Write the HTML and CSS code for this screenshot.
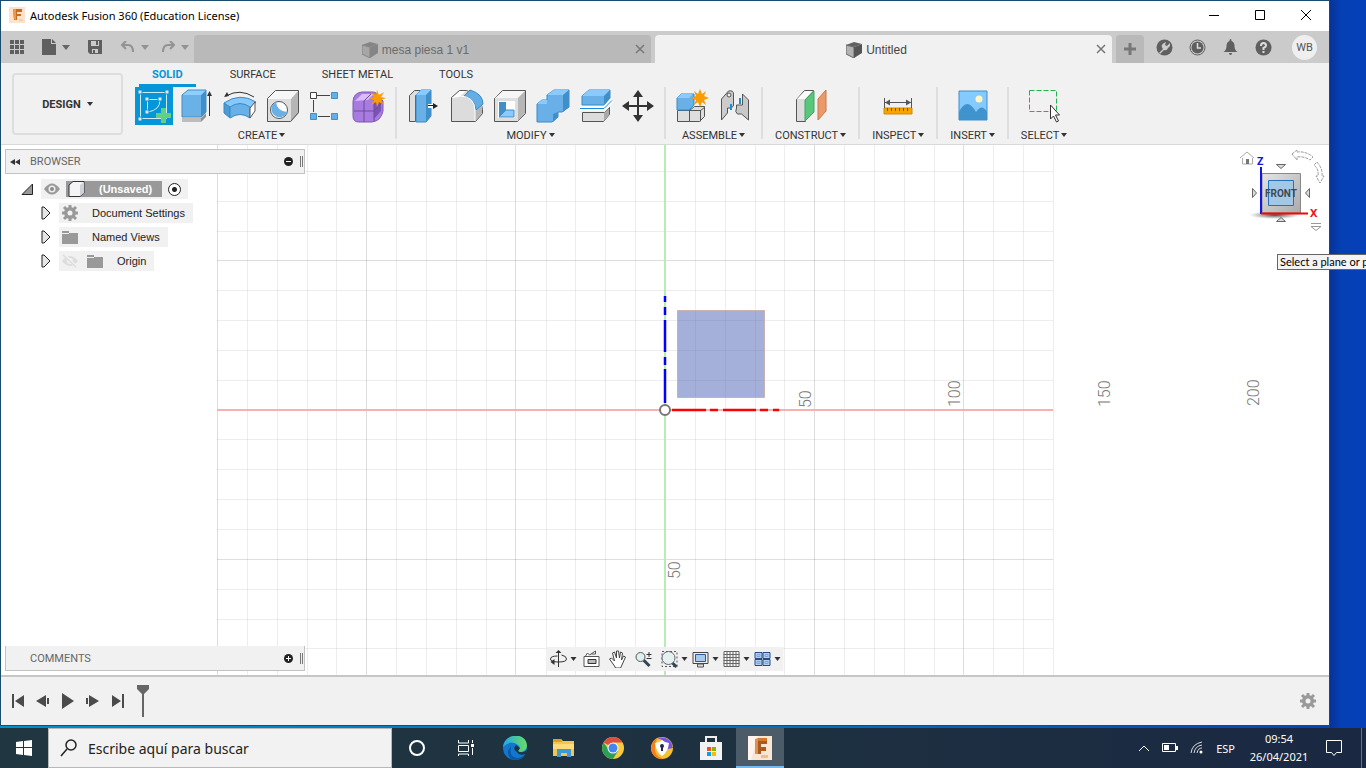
FILE: index.html
```html
<!DOCTYPE html>
<html lang="en">
<head>
<meta charset="utf-8">
<title>Autodesk Fusion 360 (Education License)</title>
<link rel="stylesheet" href="styles.css">
</head>
<body>
<main class="desktop">
  <div class="window">
    <header class="titlebar">
      <svg class="title-icon" width="16" height="16" viewBox="0 0 16 16"><rect width="16" height="16" fill="#fbe3cf"/><path d="M4 2h9v3H8v2h4v2H8v4H5z" fill="#c96d1c"/><path d="M4 2h3v11l-2-1z" fill="#e99a4b"/><path d="M10 13h4" stroke="#f0b98a"/></svg>
      <h1 class="title">Autodesk Fusion 360 (Education License)</h1>
      <div class="window-controls">
        <button class="plain ctl" aria-label="Minimize"><svg width="12" height="12"><path d="M1 6.500h10" stroke="#000"/></svg></button>
        <button class="plain ctl" aria-label="Maximize"><svg width="12" height="12"><path d="M1.500 1.500h9v9h-9z" fill="none" stroke="#000"/></svg></button>
        <button class="plain ctl" aria-label="Close"><svg width="12" height="12"><path d="M1 1l10 10M11 1L1 11" stroke="#000"/></svg></button>
      </div>
    </header>

    <nav class="appbar">
      <div class="quick">
        <button class="plain" aria-label="Data panel"><svg width="16" height="16" viewBox="0 0 16 16"><path d="M1 1h4v4H1zM6 1h4v4H6zM11 1h4v4h-4zM1 6h4v4H1zM6 6h4v4H6zM11 6h4v4h-4zM1 11h4v4H1zM6 11h4v4H6zM11 11h4v4h-4z" fill="#5f5f5f"/></svg></button>
        <button class="plain file" aria-label="File"><svg width="14" height="16" viewBox="0 0 14 16"><path d="M0 0h9v5h5v11H0zM10 0l4 4h-4z" fill="#5f5f5f"/></svg><i class="caret grey"></i></button>
        <button class="plain save" aria-label="Save"><svg width="14" height="14" viewBox="0 0 14 14"><path d="M0 0h14v14H2l-2-2zM3 1v5h8V1zM4 9v4h6V9z" fill="#5f5f5f" fill-rule="evenodd"/><path d="M8 1h2v4H8zM5 10h2v3H5z" fill="#5f5f5f"/></svg></button>
        <button class="plain undo" aria-label="Undo"><svg width="14" height="12" viewBox="0 0 14 12"><path d="M5 0L1 4l4 4M1 4h6q5 0 5 7" fill="none" stroke="#939393" stroke-width="2"/></svg><i class="caret light"></i></button>
        <button class="plain undo" aria-label="Redo"><svg width="14" height="12" viewBox="0 0 14 12"><path d="M9 0l4 4-4 4M13 4H7q-5 0-5 7" fill="none" stroke="#939393" stroke-width="2"/></svg><i class="caret light"></i></button>
      </div>
      <div class="doc-tabs">
        <div class="doc-tab idle">
          <svg width="16" height="16" viewBox="0 0 16 16"><path d="M0 3l8-3 8 2-8 3z" fill="#858585"/><path d="M0 3l8 2v11l-8-4z" fill="#a6a6a6" stroke="#858585"/><path d="M8 5l8-3v9l-8 5z" fill="#858585"/></svg><span>mesa piesa 1 v1</span>
          <button class="plain tab-close" aria-label="Close tab"><svg width="10" height="10"><path d="M1 1l8 8M9 1L1 9" stroke="#777" stroke-width="1.500"/></svg></button>
        </div>
        <div class="doc-tab current">
          <svg width="16" height="16" viewBox="0 0 16 16"><path d="M0 3l8-3 8 2-8 3z" fill="#626262"/><path d="M0 3l8 2v11l-8-4z" fill="#b2b2b2" stroke="#666"/><path d="M8 5l8-3v9l-8 5z" fill="#555"/></svg><span>Untitled</span>
          <button class="plain tab-close" aria-label="Close tab"><svg width="10" height="10"><path d="M1 1l8 8M9 1L1 9" stroke="#777" stroke-width="1.500"/></svg></button>
        </div>
        <button class="plain new-tab" aria-label="New design"><svg width="12" height="12"><path d="M6 0v12M0 6h12" stroke="#777" stroke-width="3"/></svg></button>
      </div>
      <div class="status-icons">
        <button class="plain" aria-label="Extensions"><svg width="17" height="17" viewBox="0 0 17 17"><circle cx="8.500" cy="8.500" r="8" fill="#5f5f5f"/><path d="M3 14l4-4q-3-4 1-6l2-1-1 3 2 1 3-3 0 3-2 2q-1 3-4 2l-4 4z" fill="#cbcbcb"/></svg></button>
        <button class="plain" aria-label="Job status"><svg width="17" height="17" viewBox="0 0 17 17"><circle cx="8.500" cy="8.500" r="7.500" fill="none" stroke="#5f5f5f"/><circle cx="8.500" cy="8.500" r="6" fill="#5f5f5f"/><path d="M8.500 4v5H12" fill="none" stroke="#ddd" stroke-width="1.500"/></svg></button>
        <button class="plain" aria-label="Notifications"><svg width="17" height="17" viewBox="0 0 17 17"><path d="M8.500 0q1 0 1 2 3 1 3 5 0 4 3 6h-14q3-2 3-6 0-4 3-5 0-2 1-2zM7 14h3q0 2-1.500 2T7 14z" fill="#5f5f5f"/></svg></button>
        <button class="plain" aria-label="Help"><svg width="17" height="17" viewBox="0 0 17 17"><circle cx="8.500" cy="8.500" r="8" fill="#5f5f5f"/><path d="M6 7q0-3 2.500-3T11 6.500Q11 8 8.500 9v2M8.500 12v2" fill="none" stroke="#ddd" stroke-width="2"/></svg></button>
        <button class="plain avatar">WB</button>
      </div>
    </nav>

    <section class="ribbon">
      <button class="design">DESIGN <i class="caret"></i></button>
      <div class="ribbon-main">
        <nav class="ribbon-tabs">
          <a class="rtab on" href="#">SOLID</a><a class="rtab" href="#">SURFACE</a><a class="rtab" href="#">SHEET METAL</a><a class="rtab" href="#">TOOLS</a>
        </nav>
        <div class="groups">
          <div class="group">
            <div class="tools">
              <button class="plain tool active" aria-label="Create sketch"><svg width="38" height="38"><g fill="none" stroke="#cfe9f7"><path d="M5.500 5.500h26v26h-26z"/><path d="M12.500 26V12.500H25M25 13q0 10-12 12"/></g><path d="M3 3h4v4H3zM30 3h4v4h-4zM3 30h4v4H3zM10 10h4v4h-4zM23 10h4v4h-4zM10 23h4v4h-4z" fill="#e6e6e6" stroke="#0696d7"/><path d="M26 21h5v5h5v5h-5v5h-5v-5h-5v-5h5z" fill="#5fd084"/></svg></button>
              <button class="plain tool" aria-label="Extrude"><svg width="38" height="38"><path d="M4 31h19v4H4z" fill="#bdbdbd"/><path d="M23 31l5-5v4l-5 5z" fill="#929292"/><path d="M4 8l6-5h18l-5 5z" fill="#8fceff"/><path d="M4 8h19v22H4z" fill="#6ab1e7"/><path d="M23 8l5-5v22l-5 5z" fill="#3e8fca"/><path d="M4 30V8l6-5h18v22l-5 5z" fill="none" stroke="#438dc1"/><path d="M31.500 29V6" stroke="#333"/><path d="M29 9l2.500-5L34 9z" fill="#333"/></svg></button>
              <button class="plain tool" aria-label="Revolve"><svg width="38" height="38"><path d="M3 16q16-11 32-1l-6 7q-10-7-20 0z" fill="#87c9fc" stroke="#388bc6"/><path d="M3 16l6 4v11l-6-5z" fill="#4b9bd5" stroke="#388bc6"/><path d="M9 20q10-7 20 0v11q-10-7-20 0z" fill="#69b0e6" stroke="#388bc6"/><path d="M29 21l5-6v9l-5 7z" fill="#fff" stroke="#555"/><path d="M5 9q14-8 28 1" fill="none" stroke="#333"/><path d="M3 10l3-5 2 4z" fill="#333"/></svg></button>
              <button class="plain tool" aria-label="Hole"><svg width="38" height="38"><path d="M3 12l9-9h23l-8 9z" fill="#f7f7f7"/><path d="M27 12l8-9v23l-8 9z" fill="#b6b6b6"/><path d="M3 12h24v23H3z" fill="#dedede"/><path d="M3.500 34.500V11.500l8-8h23v22l-8 9z" fill="none" stroke="#555"/><circle cx="15" cy="23" r="8.500" fill="#fff" stroke="#555"/><path d="M12 15q1 9 11 10a8 8 0 1 1-11-10z" fill="#69b0e6"/></svg></button>
              <button class="plain tool" aria-label="Pattern"><svg width="38" height="38"><path d="M10 8.500h13M6.500 13v12M11 29.500h12" stroke="#444"/><path d="M3.500 5.500h6v6h-6z" fill="#fff" stroke="#444"/><path d="M24.500 5.500h6v6h-6zM3.500 26.500h6v6h-6zM24.500 26.500h6v6h-6z" fill="#66afe6" stroke="#448fc5"/></svg></button>
              <button class="plain tool" aria-label="Create form"><svg width="38" height="38"><path d="M3 15q0-9 9-10h10q5 0 5 3l6 6v10q-2 10-11 11H9q-6 0-6-6z" fill="#a87be0" stroke="#8059b5"/><path d="M5 14l7-7h12l-6 6z" fill="#d8bbf8"/><path d="M24 15l7-3v12l-7 8z" fill="#7c53b3"/><path d="M4 24h20l8-8M14 35V14l7-7M24 34V13" fill="none" stroke="#6b4d99"/><path d="M27 3l2 5 5-3-3 5 5 1-5 2 3 5-5-3-2 5-1-5-5 3 3-5-5-2 5-1-3-5 5 3z" fill="#fa9d00"/></svg></button>
            </div>
            <button class="plain group-label">CREATE <i class="caret"></i></button>
          </div>
          <div class="group">
            <div class="tools">
              <button class="plain tool" aria-label="Press pull"><svg width="38" height="38"><path d="M5.500 34.500v-26l5-5h7l-6 5v26z" fill="#ddd" stroke="#555"/><path d="M12 8l5-5h10v26l-5 6H12z" fill="#69b0e6" stroke="#388bc6"/><path d="M12 8l5-5h10l-5 5z" fill="#8acaff"/><path d="M22 8l5-5v26l-5 6z" fill="#3e8fca"/><path d="M24 19h8" stroke="#fff" stroke-width="4"/><path d="M24 18.500h8" stroke="#222"/><path d="M29 16l5 3-5 3z" fill="#222"/></svg></button>
              <button class="plain tool" aria-label="Fillet"><svg width="38" height="38"><path d="M4.500 34.500v-24l8-7h7l13 5 3 14v4l-7 8z" fill="#dcdcdc" stroke="#555"/><path d="M5 11l8-7h6l-7 6z" fill="#fff"/><path d="M28 24l7-7v9l-7 8z" fill="#b6b6b6"/><path d="M17 9l6-6q13 4 13 14l-7 6Q28 11 17 9z" fill="#65aee5" stroke="#388bc6"/><path d="M13 9q15 0 15 15v10" fill="none" stroke="#fff"/></svg></button>
              <button class="plain tool" aria-label="Shell"><svg width="38" height="38"><path d="M4.500 11.500l8-8h23v23l-8 8h-23z" fill="#dedede" stroke="#555"/><path d="M5 11l8-7h22l-7 7z" fill="#f6f6f6"/><path d="M28 11l7-7v22l-7 8z" fill="#b6b6b6"/><path d="M8 14h17v17H8z" fill="#fff"/><path d="M9 15h7v9l-7 6z" fill="#428ec5"/><path d="M9 30l7-7h8v7z" fill="#8acaff" stroke="#428ec5"/></svg></button>
              <button class="plain tool" aria-label="Combine"><svg width="38" height="38"><path d="M4 17l5-4h5V8l7-5h15v17l-7 5h-4v5l-6 5H4z" fill="#68b0e7" stroke="#388bc6"/><path d="M14 8l7-5h15l-6 5zM4 17l5-4h5v4z" fill="#8acaff"/><path d="M30 8l6-5v17l-6 5zM20 27l5-2v5l-5 5z" fill="#3e8fca"/></svg></button>
              <button class="plain tool" aria-label="Split body"><svg width="38" height="38"><path d="M6 9l7-6h21v8l-6 7H6z" fill="#69b0e6" stroke="#388bc6"/><path d="M6 9l7-6h21l-6 6z" fill="#8acaff"/><path d="M28 9l6-6v8l-6 7z" fill="#3e8fca"/><path d="M6.500 25.500h22l5-5v7l-6 7h-21z" fill="#dcdcdc" stroke="#555"/><path d="M28 26l5-5v7l-5 6z" fill="#aaa"/><path d="M4 21.500h24l8-8" fill="none" stroke="#fff" stroke-width="4"/><path d="M4 21.500h24l8-8" fill="none" stroke="#178be0"/></svg></button>
              <button class="plain tool" aria-label="Move"><svg width="38" height="38"><path d="M19 7v25M7 19h24" stroke="#333" stroke-width="2"/><path d="M19 3l5 7H14zM19 35l5-7H14zM3 19l7-5v10zM35 19l-7-5v10z" fill="#333"/></svg></button>
            </div>
            <button class="plain group-label">MODIFY <i class="caret"></i></button>
          </div>
          <div class="group">
            <div class="tools">
              <button class="plain tool" aria-label="New component"><svg width="38" height="38"><path d="M4.500 23.500h12l5-4h10v10l-5 5h-22z" fill="#dedede" stroke="#555"/><path d="M16.500 23.500v11M16.500 23.500h11v11M27 24l5-4" fill="none" stroke="#555"/><path d="M4 11l4-4h13v11l-5 5H4z" fill="#69b0e6" stroke="#388bc6"/><path d="M4 11l4-4h12l-4 4z" fill="#8acaff"/><path d="M27 2l2 5 4-3-2 5 5 2-5 2 2 5-4-3-2 5-2-5-4 3 2-5-5-2 5-2-2-5 4 3z" fill="#f89c00"/></svg></button>
              <button class="plain tool" aria-label="Joint"><svg width="38" height="38"><path d="M5.500 12l7-8q5-1 5 3v12q-2 3-6 2v5l-6 7z" fill="#ccc" stroke="#555"/><circle cx="13" cy="8" r="2" fill="#eee" stroke="#555"/><path d="M26.500 7l6 6v20l-7-6h-4q-3-2-1-6v-3h6z" fill="#c8c8c8" stroke="#555"/><path d="M15 17v6M24 11v6" stroke="#198fd5" stroke-width="2"/></svg></button>
            </div>
            <button class="plain group-label">ASSEMBLE <i class="caret"></i></button>
          </div>
          <div class="group single">
            <div class="tools"><button class="plain tool" aria-label="Offset plane"><svg width="38" height="38"><path d="M4.500 12.500l8-9h9l-8 9v22h-9z" fill="#ddd" stroke="#555"/><path d="M5 12l8-8h8l-8 8z" fill="#fff"/><path d="M13 13l9-9v21l-9 9z" fill="#58c77c" stroke="#3ea463"/><path d="M26 12l8-9v21l-8 9z" fill="#e99a68" stroke="#ca7745"/></svg></button></div>
            <button class="plain group-label">CONSTRUCT <i class="caret"></i></button>
          </div>
          <div class="group single">
            <div class="tools"><button class="plain tool" aria-label="Measure"><svg width="38" height="38"><path d="M5 21h28v6H5z" fill="#f8a400" stroke="#cf8b0b"/><path d="M8.500 21v3M12.500 21v3M16.500 21v3M20.500 21v3M24.500 21v3M28.500 21v3M5.500 11v10M32.500 11v10M6 15.500h26" stroke="#555"/><path d="M6 15.500l5-3v6zM32 15.500l-5-3v6z" fill="#555"/></svg></button></div>
            <button class="plain group-label">INSPECT <i class="caret"></i></button>
          </div>
          <div class="group single">
            <div class="tools"><button class="plain tool" aria-label="Insert image"><svg width="38" height="38"><path d="M5 4h28v29H5z" fill="#84caff"/><path d="M5 25q8-16 17 0 6-9 11 0v8H5z" fill="#4094ce"/><circle cx="25" cy="12" r="3.500" fill="#fff7c5"/><path d="M5 4h28v29H5z" fill="none" stroke="#3e8fc8"/></svg></button></div>
            <button class="plain group-label">INSERT <i class="caret"></i></button>
          </div>
          <div class="group single">
            <div class="tools"><button class="plain tool" aria-label="Select"><svg width="38" height="38"><path d="M4.500 3.500h27v21h-27z" fill="none" stroke="#26b150" stroke-dasharray="5 2"/><path d="M25.500 18v14l3-3 3 6 2-1-3-6h4z" fill="#fff" stroke="#333"/></svg></button></div>
            <button class="plain group-label">SELECT <i class="caret"></i></button>
          </div>
        </div>
      </div>
    </section>

    <section class="viewport">
      <svg class="grid" width="100%" height="100%">
        <g transform="translate(-1 -145)" fill="none">
          <path stroke="#000" stroke-opacity=".07" d="M247.500 145v530M277.500 145v530M307.500 145v530M336.500 145v530M396.500 145v530M426.500 145v530M456.500 145v530M486.500 145v530M546.500 145v530M575.500 145v530M605.500 145v530M635.500 145v530M695.500 145v530M725.500 145v530M755.500 145v530M784.500 145v530M844.500 145v530M874.500 145v530M904.500 145v530M934.500 145v530M993.500 145v530M1023.500 145v530M1053.500 145v530M217 171.500h836M217 201.500h836M217 231.500h836M217 290.500h836M217 320.500h836M217 350.500h836M217 380.500h836M217 439.500h836M217 469.500h836M217 499.500h836M217 529.500h836M217 589.500h836M217 619.500h836M217 648.500h836"/>
          <path stroke="#000" stroke-opacity=".13" d="M217.500 145v530M366.500 145v530M515.500 145v530M814.500 145v530M963.500 145v530M217 260.500h836M217 559.500h836"/>
          <path d="M665 145v530" stroke="#b5edb3" stroke-width="2"/>
          <path d="M217 410h836" stroke="#f7b1b1" stroke-width="2"/>
          <path d="M677.500 310.500h87v87h-87z" fill="#4c62b5" fill-opacity=".5" stroke="#c8b3ae"/>
          <path d="M665 403v-34M665 365v-8M665 352v-32M665 315v-8M665 302v-6" stroke="#00f" stroke-width="2.500"/>
          <path d="M672 410h34M710 410h8M723 410h33M760 410h8M773 410h6" stroke="#f00" stroke-width="2.500"/>
          <circle cx="665" cy="410" r="5" fill="#fff" stroke="#777" stroke-width="2"/>
          <g class="scale">
            <text transform="translate(811 408) rotate(-90)">50</text>
            <text transform="translate(960 407) rotate(-90)">100</text>
            <text transform="translate(1110 407) rotate(-90)">150</text>
            <text transform="translate(1259 406) rotate(-90)">200</text>
            <text transform="translate(680 579) rotate(-90)">50</text>
          </g>
        </g>
      </svg>

      <aside class="browser">
        <header class="panel-head">
          <button class="plain panel-arrow" aria-label="Collapse"><svg width="10" height="8"><path d="M5 1v6L0 4zM10 1v6L5 4z" fill="#333"/></svg></button>
          <h2 class="panel-title">BROWSER</h2>
          <button class="plain" aria-label="Minimize panel"><svg width="9" height="9"><circle cx="4.500" cy="4.500" r="4.500" fill="#222"/><path d="M2 4.500h5" stroke="#fff"/></svg></button>
          <span class="grip"></span>
        </header>
        <ul class="tree">
          <li class="node root">
            <svg width="12" height="12"><path d="M1 11.500h10.500V1z" fill="#999" stroke="#222"/></svg>
            <span class="chip root-chip">
              <svg width="16" height="12" viewBox="0 0 16 12"><path d="M0 6q8-11 16 0-8 11-16 0z" fill="#999"/><circle cx="8" cy="6" r="3.500" fill="#eee"/><circle cx="8" cy="6" r="2" fill="#888"/></svg>
              <span class="selected"><svg width="18" height="16" viewBox="0 0 18 16"><path d="M1 4l4-3.500h11V12l-4 3.500H1z" fill="#f3f4f6" stroke="#333"/><path d="M12 4l4-3v11l-4 3z" fill="#ccd2d8"/></svg><b>(Unsaved)</b></span>
              <label class="activate"><input type="radio" checked aria-label="Activate component"></label>
            </span>
          </li>
          <li class="node"><svg width="10" height="14"><path d="M1 1h2l6 6-6 6H1z" fill="#e5e5e5" stroke="#222"/></svg><span class="chip"><svg width="16" height="16" viewBox="-8 -8 16 16"><path d="M0-8V8M-8 0H8M-6-6L6 6M6-6L-6 6" stroke="#999" stroke-width="3"/><circle r="4" fill="none" stroke="#999" stroke-width="4"/><circle r="2.500" fill="#f1f1f1"/></svg><span>Document Settings</span></span></li>
          <li class="node"><svg width="10" height="14"><path d="M1 1h2l6 6-6 6H1z" fill="#e5e5e5" stroke="#222"/></svg><span class="chip"><svg width="16" height="14"><path d="M0 1h7v2h9v11H0z" fill="#999"/><path d="M0 3.500h7" stroke="#eee"/></svg><span>Named Views</span></span></li>
          <li class="node"><svg width="10" height="14"><path d="M1 1h2l6 6-6 6H1z" fill="#e5e5e5" stroke="#222"/></svg><span class="chip"><svg width="16" height="14" viewBox="0 0 16 14"><path d="M0 7q8-10 16 0-8 10-16 0z" fill="#ddd"/><circle cx="8" cy="7" r="3" fill="#f1f1f1"/><path d="M2 1l13 12" stroke="#f1f1f1" stroke-width="3"/><path d="M1 1l13 12" stroke="#ddd" stroke-width="1.500"/></svg><svg class="second" width="16" height="14"><path d="M0 1h7v2h9v11H0z" fill="#999"/><path d="M0 3.500h7" stroke="#eee"/></svg><span>Origin</span></span></li>
        </ul>
      </aside>

      <svg class="viewcube" width="96" height="92" viewBox="1233 147 96 92">
        <defs>
          <linearGradient id="face" x2="1" y2="1"><stop stop-color="#e5e5e5"/><stop offset="1" stop-color="#aaa"/></linearGradient>
          <radialGradient id="shade"><stop stop-color="#444"/><stop offset="1" stop-color="#777" stop-opacity="0"/></radialGradient>
        </defs>
        <path d="M1240 158l7-6 7 6M1242.500 158v6h10v-6" fill="#fff" stroke="#aaa"/><path d="M1246 159h3v5h-3z" fill="#777"/>
        <ellipse cx="1275" cy="215" rx="26" ry="4" fill="url(#shade)"/>
        <path d="M1262 173.500h38.500V213H1262z" fill="url(#face)" stroke="#888"/>
        <path d="M1268.500 180.500h25v25h-25z" fill="#a3c8e6" stroke="#2374bb"/>
        <text class="cube-label" x="1281" y="197" text-anchor="middle">FRONT</text>
        <path d="M1261 167v47" stroke="#1515e8" stroke-width="2"/><path d="M1261 213.500h47" stroke="#f00" stroke-width="2"/>
        <text class="axis" x="1257" y="165" fill="#1414e6">Z</text><text class="axis" x="1310" y="217" fill="#ee1111">X</text>
        <path d="M1276.500 164.500h9l-4.500 4zM1276.500 221.500h9l-4.500-4zM1252.500 188.500v9l4-4.500zM1309.500 188.500v9l-4-4.500z" fill="#ddd" stroke="#666"/>
        <path d="M1292 154l5-4v2q9-1 16 5l-3 3q-6-4-13-3v3zM1317 162q6 7 5 14h2l-4 7-4-7h2q1-7-4-11z" fill="#fff" stroke="#999" stroke-dasharray="3 1"/>
        <path d="M1311 223.500h10M1311 226.500h10l-5 4z" fill="#fff" stroke="#999"/>
      </svg>

      <aside class="comments">
        <h2 class="panel-title">COMMENTS</h2>
        <button class="plain" aria-label="Add comment"><svg width="9" height="9"><circle cx="4.500" cy="4.500" r="4.500" fill="#222"/><path d="M2 4.500h5M4.500 2v5" stroke="#fff"/></svg></button>
        <span class="grip"></span>
      </aside>

      <nav class="navbar">
        <button class="plain nav orbit" aria-label="Orbit"><svg width="18" height="18"><path d="M9 1v16M12 5q5 1 5 4t-8 3-8-3 7-3" fill="none" stroke="#333"/><path d="M6 3l3-3 3 3M5 9l-4 3 4 3z" fill="#333"/></svg><i class="caret"></i></button>
        <button class="plain nav" aria-label="Look at"><svg width="18" height="18"><path d="M1.500 6.500h15v10h-15zM3 6l2-3 2 2 6-4v3H9" fill="#fff" stroke="#555"/><path d="M5.500 9.500h8v4h-8z" fill="#bbb" stroke="#333"/></svg></button>
        <button class="plain nav" aria-label="Pan"><svg width="18" height="18"><path d="M6 16L1 9l2-1 3 3L4 3l2-1 2 6V1h2l1 7 1-6 2 1-1 7 2-4 2 1-4 9-1 2H7z" fill="#fff" stroke="#444"/></svg></button>
        <button class="plain nav" aria-label="Zoom"><svg width="18" height="18"><path d="M9 10l6 6" stroke="#345" stroke-width="3"/><circle cx="6" cy="7" r="4.500" fill="#def0f2" stroke="#555"/><path d="M12 4.500h5M14.500 2v5M12 8.500h5" stroke="#333"/></svg></button>
        <button class="plain nav" aria-label="Fit"><svg width="18" height="18"><path d="M1.500 1.500h15v15h-15z" fill="none" stroke="#555" stroke-dasharray="2 2"/><path d="M11 12l5 5" stroke="#345" stroke-width="3"/><circle cx="8" cy="8" r="6.500" fill="#e4f1ef" stroke="#667"/></svg><i class="caret"></i></button>
        <button class="plain nav" aria-label="Display settings"><svg width="18" height="18"><path d="M1.500 2.500h15v11h-15z" fill="#eee" stroke="#444"/><path d="M4 4.500h10v7H4z" fill="#a6c9ed" stroke="#31579a"/><path d="M6 14h6v3H6z" fill="#ddd" stroke="#555"/></svg><i class="caret"></i></button>
        <button class="plain nav" aria-label="Grid and snaps"><svg width="18" height="18"><path d="M1.500 1.500h15v15h-15zM4.500 1v16M7.500 1v16M10.500 1v16M13.500 1v16M1 4.500h16M1 7.500h16M1 10.500h16M1 13.500h16" fill="#f8f8f8" stroke="#666"/></svg><i class="caret"></i></button>
        <button class="plain nav" aria-label="Viewports"><svg width="18" height="18"><path d="M1.500 2.500h7v6h-7zM9.500 2.500h7v6h-7zM1.500 9.500h7v6h-7zM9.500 9.500h7v6h-7z" fill="#b4d0ef" stroke="#294b82"/><path d="M3.500 4.500h3v2h-3zM11.500 4.500h3v2h-3zM3.500 11.500h3v2h-3zM11.500 11.500h3v2h-3z" fill="none" stroke="#7ea6d8"/></svg><i class="caret"></i></button>
      </nav>
    </section>

    <footer class="timeline">
      <div class="playback">
        <button class="plain" aria-label="First"><svg width="14" height="16"><path d="M1 1h2v14H1zM13 2v12L4 8z" fill="#4b4b4b"/></svg></button>
        <button class="plain" aria-label="Previous"><svg width="14" height="16"><path d="M10 2v12L0 8zM11 5h2v6h-2z" fill="#4b4b4b"/></svg></button>
        <button class="plain" aria-label="Play"><svg width="14" height="16"><path d="M1 0l12 8-12 8z" fill="#4b4b4b"/></svg></button>
        <button class="plain" aria-label="Next"><svg width="14" height="16"><path d="M3 2v12l10-6zM0 5h2v6H0z" fill="#4b4b4b"/></svg></button>
        <button class="plain" aria-label="Last"><svg width="14" height="16"><path d="M11 1h2v14h-2zM1 2v12l9-6z" fill="#4b4b4b"/></svg></button>
        <svg class="marker" width="12" height="32"><path d="M0 0h12v4L7 9v23H5V9L0 4z" fill="#666"/></svg>
      </div>
      <button class="plain" aria-label="Timeline settings"><svg width="16" height="16" viewBox="-8 -8 16 16"><path d="M0-8V8M-8 0H8M-6-6L6 6M6-6L-6 6" stroke="#999" stroke-width="3"/><circle r="4" fill="none" stroke="#999" stroke-width="4"/><circle r="2.500" fill="#f1f1f1"/></svg></button>
    </footer>
  </div>
  <div class="tooltip" role="tooltip">Select a plane or p</div>
</main>

<footer class="taskbar">
  <button class="plain start" aria-label="Start"><svg width="16" height="16"><path d="M0 2l7-1v6H0zM8 1l8-1v7H8zM0 8h7v7l-7-1zM8 8h8v8l-8-1z" fill="#fff"/></svg></button>
  <label class="search"><svg width="18" height="18"><circle cx="11" cy="6" r="5" fill="none" stroke="#222" stroke-width="1.500"/><path d="M7 10l-6 7" stroke="#222" stroke-width="1.500"/></svg><input type="text" placeholder="Escribe aquí para buscar" aria-label="Buscar"></label>
  <div class="apps">
    <button class="plain app" aria-label="Cortana"><svg width="24" height="24"><circle cx="12" cy="12" r="7" fill="none" stroke="#fff" stroke-width="2"/></svg></button>
    <button class="plain app" aria-label="Task view"><svg width="24" height="24"><path d="M4.500 4v3h10V4M4.500 9.500h10v6h-10zM4.500 20v-2h10v2M18.500 4v3M18.500 12v7" fill="none" stroke="#fff"/><path d="M17 8h3v3h-3z" fill="#fff"/></svg></button>
    <button class="plain app" aria-label="Edge"><svg width="24" height="24"><defs><linearGradient id="wave"><stop stop-color="#20a9e8"/><stop offset="1" stop-color="#68dc62"/></linearGradient></defs><circle cx="12" cy="12" r="12" fill="#1278cf"/><path d="M0 11C2-4 24-4 24 10q-1 7-10 6 5-4 1-7Q8 3 0 11z" fill="url(#wave)"/><path d="M8 12q-2 9 6 10 5 0 8-4-2 6-9 6Q4 23 5 15l3-5z" fill="#0b58a7"/><path d="M14 16q-5-3-1-7l4 3-2 3q4 3 9-1l-1 4q-7 2-9-2z" fill="#20343f"/></svg></button>
    <button class="plain app" aria-label="File Explorer"><svg width="24" height="24"><path d="M1 3h8l2 2h11v15H1z" fill="#f5c64e"/><path d="M1 3h8l1 3H1z" fill="#dda21c"/><path d="M1 8h21v5H1z" fill="#ffdc79"/><path d="M5 21v-8h14v8h-4v-4H9v4z" fill="#3e99d8"/></svg></button>
    <button class="plain app" aria-label="Chrome"><svg width="24" height="24"><circle cx="12" cy="12" r="11" fill="#f8ca3c"/><path d="M2.500 6.500a11 11 0 0 1 19 0H12v5z" fill="#dc4d42"/><path d="M2.500 6.500A11 11 0 0 0 12 23l5-8-9-1z" fill="#2a9f5b"/><circle cx="12" cy="12" r="5.500" fill="#fff"/><circle cx="12" cy="12" r="4.500" fill="#4486ef"/></svg></button>
    <button class="plain app" aria-label="Secure browser"><svg width="24" height="24"><circle cx="12" cy="12" r="11" fill="#f5c230"/><path d="M7 2q14-3 16 10l-5 1Q16 4 7 2z" fill="#7954df"/><path d="M7 2Q-1 7 2 17q4 7 11 6-9-3-8-12z" fill="#f47f1c"/><path d="M12 4q3 3 7 3-1 9-7 13Q6 16 5 7q4 0 7-3z" fill="#fff"/><circle cx="12" cy="10" r="2" fill="#292653"/><path d="M11 11h2v4h-2z" fill="#292653"/></svg></button>
    <button class="plain app" aria-label="Store"><svg width="24" height="24"><path d="M1 6h22v18H1z" fill="#f2f2f2"/><path d="M7 7V1h10v6" fill="none" stroke="#eee" stroke-width="2"/><path d="M8 11h4v4H8z" fill="#f25022"/><path d="M13 11h4v4h-4z" fill="#7fba00"/><path d="M8 16h4v4H8z" fill="#00a4ef"/><path d="M13 16h4v4h-4z" fill="#ffb900"/></svg></button>
    <button class="plain app running" aria-label="Fusion 360"><svg width="24" height="24"><path d="M0 0h24v24H0z" fill="#fbe5d3"/><path d="M0 0h10L3 24H0z" fill="#fff5ed"/><path d="M8 3h11v5h-6v3h5v4h-5v3H9z" fill="#a85a20"/><path d="M7 3l3-1v16H7z" fill="#dd9350"/><path d="M10 2h9v3h-9z" fill="#d07b32"/><path d="M13 19h7v3h-7z" fill="#edbd94"/></svg></button>
  </div>
  <div class="tray">
    <button class="plain" aria-label="Hidden icons"><svg width="12" height="8"><path d="M1 7l5-5 5 5" fill="none" stroke="#fff"/></svg></button>
    <svg width="16" height="10"><path d="M.500.500h13v8H.500z" fill="none" stroke="#fff"/><path d="M2 2h5v5H2zM14 3h2v4h-2z" fill="#fff"/></svg>
    <svg width="14" height="14"><path d="M1 12Q2 3 12 1M4 12q1-7 8-8M7 12q1-5 5-5" fill="none" stroke="#ddd"/><circle cx="11" cy="11" r="1.500" fill="#fff"/></svg>
    <span class="lang">ESP</span>
    <time class="clock">09:54<br>26/04/2021</time>
    <button class="plain note" aria-label="Notifications"><svg width="16" height="16"><path d="M.500.500h15v12h-5l-2.500 3-2.500-3h-5z" fill="none" stroke="#fff"/></svg></button>
    <span class="peek"></span>
  </div>
</footer>
</body>
</html>
```
FILE: styles.css
```css
* { box-sizing: border-box; }
html, body { height: 100%; margin: 0; }
body { display: flex; flex-direction: column; overflow: hidden; background: #0640b9; color: #333; font-family: "Liberation Sans", Arial, sans-serif; font-size: 11px; }
svg { display: block; flex: none; }
h1, h2, ul { margin: 0; padding: 0; font-weight: normal; font-size: inherit; }
.plain { margin: 0; padding: 0; border: 0; background: none; color: inherit; font: inherit; display: flex; align-items: center; }
.caret { display: block; width: 0; border: 3px solid transparent; border-top: 4px solid #333; border-bottom: 0; }
.caret.grey { border-top-color: #666; border-width: 5px 4px 0; }
.caret.light { border-top-color: #939393; border-width: 5px 4px 0; }

.desktop { position: relative; flex: 1; min-height: 0; padding: 0 36px 2px 0; background: linear-gradient(90deg, #008fc8, #066cb9 60%, #0640b9); }
.desktop::after { content: ""; position: absolute; top: 0; right: 0; bottom: 0; width: 36px; background: linear-gradient(90deg, #063397, #0540b5 30%, #0640b9); }
.window { height: 100%; display: flex; flex-direction: column; border: 1px solid #1b4c6e; background: #fff; }

.titlebar { display: flex; align-items: center; height: 30px; flex: none; padding: 0 17px 2px 8px; font-family: "Noto Sans", sans-serif; color: #000; }
.title { flex: 1; margin-left: 5px; font-size: 11px; }
.window-controls { display: flex; gap: 34px; }

.appbar { display: flex; height: 32px; flex: none; background: #cbcbcb; }
.quick { display: flex; align-items: center; width: 193px; flex: none; padding-left: 8px; }
.quick .plain { gap: 6px; }
.file { margin-left: 17px; }
.save { margin-left: 18px; }
.undo { margin-left: 19px; }
.undo + .undo { margin-left: 12px; }
.doc-tabs { display: flex; flex: 1; gap: 4px; padding-top: 4px; font-size: 12px; }
.doc-tab { position: relative; flex: 1; display: flex; align-items: center; justify-content: center; gap: 4px; padding: 1px 14px 0 0; border-radius: 4px 4px 0 0; }
.idle { background: #b9b9b9; color: #6b6b6b; }
.current { background: #f1f1f1; color: #444; }
.tab-close { position: absolute; right: 6px; top: 9px; }
.new-tab { width: 28px; justify-content: center; background: #b9b9b9; border-radius: 4px 4px 0 0; }
.status-icons { display: flex; align-items: center; gap: 16px; padding: 0 12px; }
.avatar { width: 25px; height: 25px; margin-left: 4px; justify-content: center; border-radius: 50%; background: #efefef; color: #555; font-family: Roboto, sans-serif; }

.ribbon { display: flex; flex: none; height: 82px; background: #f1f1f1; border-bottom: 1px solid #d9d9d9; font-family: Roboto, sans-serif; }
.design { display: flex; align-items: center; justify-content: center; gap: 6px; width: 111px; height: 62px; margin: 10px 5px 0 11px; border: 2px solid #dedede; border-radius: 4px; background: #f1f1f1; color: #333; font: bold 11px Roboto, sans-serif; }
.ribbon-tabs { display: flex; gap: 46px; height: 24px; padding-left: 11px; }
.rtab { display: flex; align-items: center; padding-bottom: 2px; color: #333; text-decoration: none; white-space: nowrap; }
.rtab.on { color: #0696d7; font-weight: bold; border-bottom: 3px solid #0696d7; padding: 2px 13px 0; margin-right: -12px; }
.groups { display: flex; }
.group { display: flex; flex-direction: column; align-items: center; padding: 0 7px; border-right: 2px solid #dedede; height: 52px; }
.group:last-child { border-right: 0; }
.single { padding: 0 12px; }
.tools { display: flex; gap: 5px; }
.tool { width: 38px; height: 38px; flex: none; }
.active { background: #0696d7; }
.group-label { gap: 2px; height: 20px; flex: none; white-space: nowrap; }

.viewport { position: relative; flex: 1; min-height: 0; overflow: hidden; background: #fff; }
.grid { display: block; }
.scale { fill: #777; font-size: 16px; font-family: Roboto, sans-serif; font-weight: 300; }
.browser { position: absolute; top: 4px; left: 4px; width: 300px; }
.panel-head, .comments { display: flex; align-items: center; height: 25px; border: 1px solid #c2c2c2; background: #f1f1f1; padding: 0 1px 0 4px; color: #666; }
.panel-title { flex: 1; margin-left: 10px; font-family: Roboto, sans-serif; }
.grip { width: 3px; height: 11px; margin-left: 7px; border: solid #777; border-width: 0 1px; }
.comments { position: absolute; left: 4px; bottom: 4px; width: 300px; border-top: 0; padding-left: 14px; }
.tree { list-style: none; padding: 5px 0 0 16px; color: #222; }
.node { display: flex; align-items: center; gap: 8px; height: 20px; margin-bottom: 4px; padding-left: 20px; }
.root { padding: 0; }
.chip { display: flex; align-items: center; height: 20px; padding: 0 8px 0 3px; gap: 14px; background: #f1f1f1; }
.root-chip { gap: 6px; padding-right: 7px; }
.second { margin-left: -5px; }
.selected { display: flex; align-items: center; gap: 13px; height: 16px; padding: 0 10px 0 2px; background: #999; color: #fff; }
.activate { display: flex; }
.activate input { appearance: none; width: 13px; height: 13px; margin: 0; border: 1px solid #222; border-radius: 50%; background: radial-gradient(#222 0 2px, #fff 3px); }
.viewcube { position: absolute; top: 2px; right: 0; }
.cube-label { font: bold 10px Roboto, sans-serif; fill: #3d4a58; }
.axis { font: bold 11px "Noto Sans", sans-serif; }
.navbar { position: absolute; bottom: 4px; left: 50%; transform: translateX(-50%); display: flex; align-items: center; gap: 8px; height: 24px; padding: 0 7px 0 3px; background: #f1f1f1; }
.nav { gap: 3px; }
.orbit { margin-right: -2px; }
.nav:nth-child(n+5) { margin-right: -4px; }

.timeline { display: flex; align-items: center; justify-content: space-between; height: 50px; flex: none; padding: 0 13px 0 10px; border-top: 2px solid #c6c6c6; background: #f1f1f1; }
.playback { display: flex; align-items: center; gap: 11px; }
.marker { margin-left: 1px; }

.tooltip { position: absolute; z-index: 2; top: 254px; left: calc(100% - 89px); right: 0; height: 16px; padding-left: 2px; border: 1px solid #666; border-right: 0; background: #f4f4f4; color: #000; font: 11px/14px Lato, sans-serif; white-space: nowrap; }

.taskbar { display: flex; height: 40px; flex: none; background: linear-gradient(90deg, #203640, #1d3040 60%, #1a2842); color: #fff; font-family: "Noto Sans", sans-serif; }
.start { width: 48px; justify-content: center; flex: none; }
.search { display: flex; align-items: center; gap: 10px; width: 344px; padding-left: 11px; border: 1px solid #b8b8b8; background: #f2f2f2; }
.search input { flex: 1; min-width: 0; padding: 0; border: 0; background: none; outline: 0; font: 14px "Noto Sans", sans-serif; }
.search input::placeholder { color: #222; opacity: 1; }
.apps { display: flex; gap: 1px; padding-left: 1px; }
.app { width: 48px; height: 40px; justify-content: center; }
.running { background: #4b5b68; border-bottom: 2px solid #76b9ed; padding-top: 2px; }
.tray { display: flex; align-items: center; margin-left: auto; gap: 12px; font-size: 11px; }
.clock { width: 64px; line-height: 18px; text-align: center; }
.note { margin: 0 8px 0 3px; }
.peek { align-self: stretch; width: 5px; margin-left: -1px; border-left: 1px solid #66728a; }
```
